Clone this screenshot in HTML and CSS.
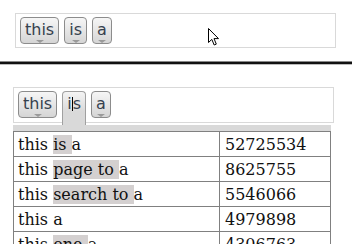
FILE: index.html
```html
<!DOCTYPE html>
<html lang="en">
<head>
  <meta charset="UTF-8">
  <title>Token Search</title>
  <link rel="stylesheet" href="styles.css">
</head>
<body>

  <div class="tokens tokens-top">
    <span class="tok">this</span>
    <span class="tok">is</span>
    <span class="tok">a</span>
  </div>

  <svg class="pointer" width="13" height="20" viewBox="0 0 13 20">
    <path d="M1.5 1.5 L1.5 15.5 L4.8 12.4 L7.2 18 L9.3 17.1 L7 11.6 L11.5 11.6 Z" fill="#fff" stroke="#000" stroke-width="1" stroke-linejoin="round"/>
  </svg>

  <div class="divider"></div>

  <div class="tokens tokens-edit">
    <span class="tok">this</span>
    <span class="tok tok-open">i<span class="caret"></span>s</span>
    <span class="tok">a</span>
  </div>
  <div class="tab-bar"></div>

  <table class="results">
    <tr><td class="phrase">this <span class="hl">is </span>a</td><td class="count">52725534</td></tr>
    <tr><td class="phrase">this <span class="hl">page to </span>a</td><td class="count">8625755</td></tr>
    <tr><td class="phrase">this <span class="hl">search to </span>a</td><td class="count">5546066</td></tr>
    <tr><td class="phrase">this a</td><td class="count">4979898</td></tr>
    <tr><td class="phrase">this <span class="hl">one </span>a</td><td class="count">4306763</td></tr>
  </table>

</body>
</html>
```

FILE: styles.css
```css
html, body {
  margin: 0;
  background: #fff;
}

body {
  position: relative;
  width: 352px;
  height: 244px;
  overflow: hidden;
  padding-top: 13px;
  box-sizing: border-box;
}

.tokens {
  display: flex;
  align-items: flex-start;
  gap: 5px;
  width: 321px;
  height: 35px;
  padding: 3px 4px;
  border: 1px solid #d9d9d9;
  box-sizing: border-box;
}

.tokens-top {
  margin-left: 15px;
}

.tokens-edit {
  margin-left: 13px;
  margin-top: 22px;
  height: 36px;
  padding-left: 4px;
}

.tok {
  display: flex;
  flex-direction: column;
  align-items: center;
  height: 27px;
  box-sizing: border-box;
  padding: 3px 4px 0;
  border: 1px solid #8c8c8c;
  border-radius: 4px;
  background: linear-gradient(#f6f6f6, #d5d5d5);
  font-family: "DejaVu Sans", sans-serif;
  font-size: 16px;
  line-height: 18px;
  color: #36414e;
}

.tok::after {
  content: "";
  width: 0;
  height: 0;
  border-left: 4px solid transparent;
  border-right: 4px solid transparent;
  border-top: 3px solid #9a9a9a;
  margin-top: 1px;
}

.tok-open {
  display: block;
  height: 34px;
  border-bottom: none;
  border-radius: 4px 4px 0 0;
  background: linear-gradient(#f4f4f4, #d9d9d9 60%);
  border-color: #a0a0a0;
}

.tok-open::after {
  display: none;
}

.caret {
  display: inline-block;
  width: 1px;
  height: 14px;
  margin: 0 0 -1px;
  background: #000;
  vertical-align: -1px;
}

.pointer {
  position: absolute;
  left: 207px;
  top: 27px;
}

.divider {
  height: 2px;
  margin-top: 13px;
  background: #111;
  border-top: 1px solid #888;
  border-bottom: 1px solid #bbb;
}

.tab-bar {
  width: 318px;
  height: 6px;
  margin: 2px 0 0 13px;
  background: #d9d9d9;
}

.results {
  margin-left: 13px;
  width: 318px;
  border-collapse: collapse;
  font-family: "DejaVu Serif", serif;
  font-size: 16px;
  color: #111;
}

.results td {
  height: 25px;
  padding: 0 4px;
  border: 1px solid #808080;
  box-sizing: border-box;
  white-space: nowrap;
}

.results .phrase {
  width: 206px;
}

.results .count {
  padding-left: 5px;
}

.hl {
  background: #d4d0d0;
}
```
